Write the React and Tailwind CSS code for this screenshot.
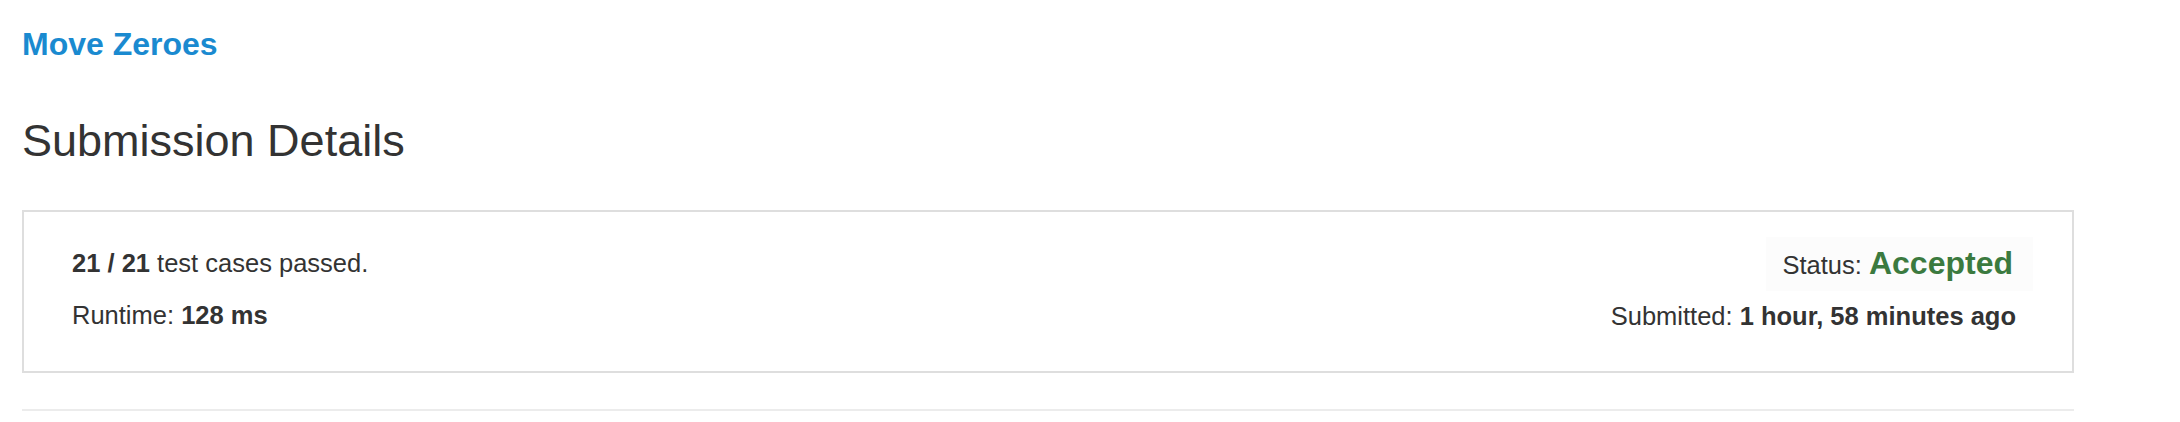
import React from 'react';

export default function App() {
    const result = {
        problem: 'Move Zeroes',
        passed: 21,
        total: 21,
        runtime: '128 ms',
        status: 'Accepted',
        submitted: '1 hour, 58 minutes ago',
    };

    return (
        <div className="min-h-screen bg-white font-['Liberation_Sans',Arial,sans-serif] text-[#333]">
            <div className="ml-[22px] w-[2052px] pt-[27px]">
                <a href="#" className="block text-[32px] leading-[34px] font-bold text-[#1a8ad0]">
                    {result.problem}
                </a>

                <h2 className="mt-[56px] text-[45px] leading-[48px] font-normal">Submission Details</h2>

                {/* result panel */}
                <div className="mt-[45px] border-2 border-[#dedede] pl-[48px] pr-[56px] pt-[25px] pb-[37px] flex justify-between items-start text-[25.5px] leading-[36px]">
                    <div className="pt-[8px]">
                        <p>
                            <strong>{result.passed} / {result.total}</strong> test cases passed.
                        </p>
                        <p className="mt-[16px]">
                            Runtime: <strong>{result.runtime}</strong>
                        </p>
                    </div>

                    <div className="flex flex-col items-end">
                        <div className="bg-[#fcfcfc] pl-[16px] pr-[20px] py-[8px] -mr-[17px]">
                            Status: <span className="text-[32px] font-bold text-[#3b7a3f]">{result.status}</span>
                        </div>
                        <p className="mt-[7px]">
                            Submitted: <strong>{result.submitted}</strong>
                        </p>
                    </div>
                </div>

                <hr className="mt-[36px] border-0 h-[2px] bg-[#ececec]" />
            </div>
        </div>
    );
}
